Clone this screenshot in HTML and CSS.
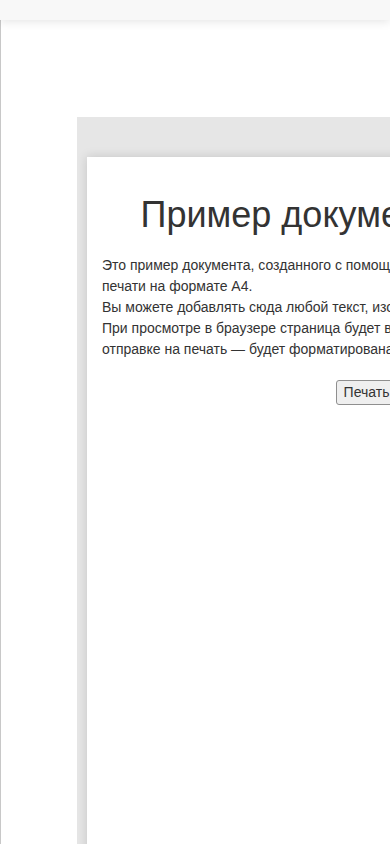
FILE: index.html
```html
<!DOCTYPE html>
<html lang="ru">
<head>
    <meta charset="UTF-8">
    <meta name="viewport" content="width=device-width, initial-scale=1.0">
    <title>Пример документа A4</title>
    <link rel="stylesheet" href="styles.css">
</head>
<body>
    <!-- Toolbar -->
    <div class="toolbar"></div>

    <!-- Document viewer -->
    <div class="viewer">
        <div class="desk">
            <div class="page">
                <h1>Пример документа для A4.</h1>
                <p>Это пример документа, созданного с помощью HTML и CSS, удобного для печати на формате A4.</p>
                <p>Вы можете добавлять сюда любой текст, изображения и таблицы.</p>
                <p>При просмотре в браузере страница будет выглядеть как лист A4, а при отправке на печать — будет форматирована правильно.</p>
                <div class="actions">
                    <button class="print-btn" onclick="window.print()">Печать</button>
                </div>
            </div>
        </div>
    </div>
</body>
</html>
```

FILE: styles.css
```css
html, body {
    margin: 0;
    overflow: hidden;
}
body {
    font-family: "Liberation Sans", Arial, sans-serif;
    color: #333;
    background: #fff;
    height: 100vh;
}
.toolbar {
    position: relative;
    z-index: 2;
    height: 20px;
    background: #f8f8f8;
    box-shadow: 0 2px 10px rgba(0, 0, 0, 0.1);
}
.viewer {
    height: calc(100vh - 20px);
    border-left: 1px solid #c8c8c8;
    padding: 97px 0 0 76px;
    box-sizing: border-box;
    overflow: hidden;
}
.desk {
    width: 700px;
    height: 1200px;
    background: #e6e6e6;
    padding: 40px 0 0 10px;
}
.page {
    width: 529px;
    min-height: 1100px;
    padding: 15px;
    background: #fff;
    box-shadow: 0 0 10px rgba(0, 0, 0, 0.15);
}
h1 {
    font-size: 36px;
    font-weight: normal;
    text-align: center;
    margin: 22px 0 19px;
}
p {
    font-size: 14px;
    line-height: 21px;
    margin: 0;
}
.actions {
    display: flex;
    justify-content: center;
    margin-top: 20px;
}
.print-btn {
    font-family: "Liberation Sans", Arial, sans-serif;
    font-size: 14px;
    line-height: 17px;
    color: #333;
    padding: 3px 7px;
    background: #efefef;
    border: 1px solid #8f8f8f;
    border-radius: 3px;
    cursor: pointer;
}
```
